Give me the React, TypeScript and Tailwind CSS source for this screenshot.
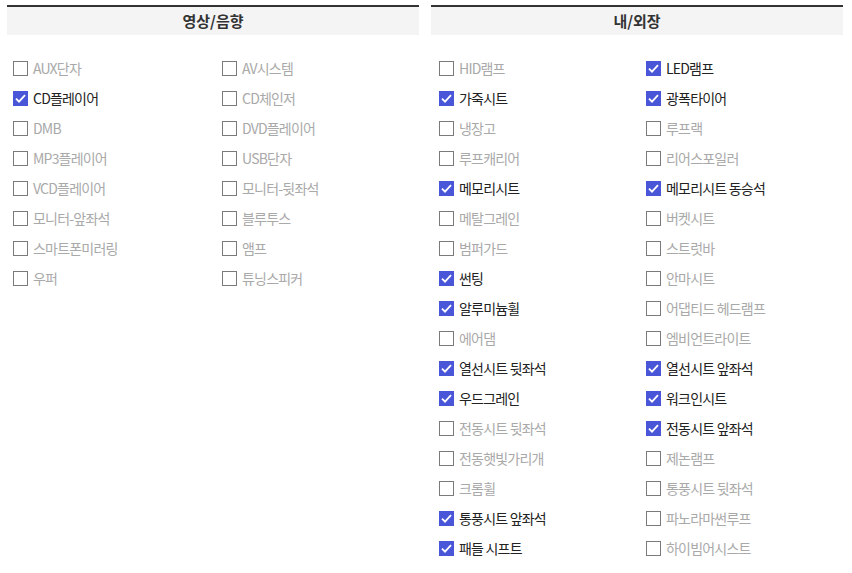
type Option = { label: string; checked?: boolean }

const AV_OPTIONS: Option[] = [
    { label: 'AUX단자' },
    { label: 'AV시스템' },
    { label: 'CD플레이어', checked: true },
    { label: 'CD체인저' },
    { label: 'DMB' },
    { label: 'DVD플레이어' },
    { label: 'MP3플레이어' },
    { label: 'USB단자' },
    { label: 'VCD플레이어' },
    { label: '모니터-뒷좌석' },
    { label: '모니터-앞좌석' },
    { label: '블루투스' },
    { label: '스마트폰미러링' },
    { label: '앰프' },
    { label: '우퍼' },
    { label: '튜닝스피커' },
]

const BODY_OPTIONS: Option[] = [
    { label: 'HID램프' },
    { label: 'LED램프', checked: true },
    { label: '가죽시트', checked: true },
    { label: '광폭타이어', checked: true },
    { label: '냉장고' },
    { label: '루프랙' },
    { label: '루프캐리어' },
    { label: '리어스포일러' },
    { label: '메모리시트', checked: true },
    { label: '메모리시트 동승석', checked: true },
    { label: '메탈그레인' },
    { label: '버켓시트' },
    { label: '범퍼가드' },
    { label: '스트럿바' },
    { label: '썬팅', checked: true },
    { label: '안마시트' },
    { label: '알루미늄휠', checked: true },
    { label: '어댑티드 헤드램프' },
    { label: '에어댐' },
    { label: '엠비언트라이트' },
    { label: '열선시트 뒷좌석', checked: true },
    { label: '열선시트 앞좌석', checked: true },
    { label: '우드그레인', checked: true },
    { label: '워크인시트', checked: true },
    { label: '전동시트 뒷좌석' },
    { label: '전동시트 앞좌석', checked: true },
    { label: '전동햇빛가리개' },
    { label: '제논램프' },
    { label: '크롬휠' },
    { label: '통풍시트 뒷좌석' },
    { label: '통풍시트 앞좌석', checked: true },
    { label: '파노라마썬루프' },
    { label: '패들 시프트', checked: true },
    { label: '하이빔어시스트' },
]

function CheckItem({ label, checked }: Option) {
    return (
        <label className="flex h-[30px] items-center gap-[5px]">
            {checked ? (
                <span className="flex h-[15px] w-[15px] items-center justify-center bg-[#4a56d8]">
                    <svg width="11" height="9" viewBox="0 0 11 9" fill="none">
                        <path d="M1 4.6 L4 7.6 L10 1.2" stroke="#fff" strokeWidth="1.8" />
                    </svg>
                </span>
            ) : (
                <span className="h-[15px] w-[15px] border border-[#7a7a7a] bg-white" />
            )}
            <span className={`text-[14px] tracking-[-0.8px] ${checked ? 'text-[#222]' : 'text-[#a9a9a9]'}`}>{label}</span>
        </label>
    )
}

function Section({ title, options, grid }: { title: string; options: Option[]; grid: string }) {
    return (
        <section className="w-[412px]">
            <h2 className="flex h-[30px] items-center justify-center border-t-2 border-[#333] bg-[#f4f4f4] text-[15px] font-bold text-[#333]">
                {title}
            </h2>
            <div className={`mt-[18px] grid ${grid}`}>
                {options.map((option) => (
                    <CheckItem key={option.label} {...option} />
                ))}
            </div>
        </section>
    )
}

export default function App() {
    return (
        <div className="flex gap-[12px] bg-white pl-[7px] pt-[5px]" style={{ fontFamily: '"Noto Sans CJK KR", "Noto Sans", sans-serif' }}>
            <Section title="영상/음향" options={AV_OPTIONS} grid="grid-cols-[209px_1fr] pl-[6px]" />
            <Section title="내/외장" options={BODY_OPTIONS} grid="grid-cols-[207px_1fr] pl-[8px]" />
        </div>
    )
}
